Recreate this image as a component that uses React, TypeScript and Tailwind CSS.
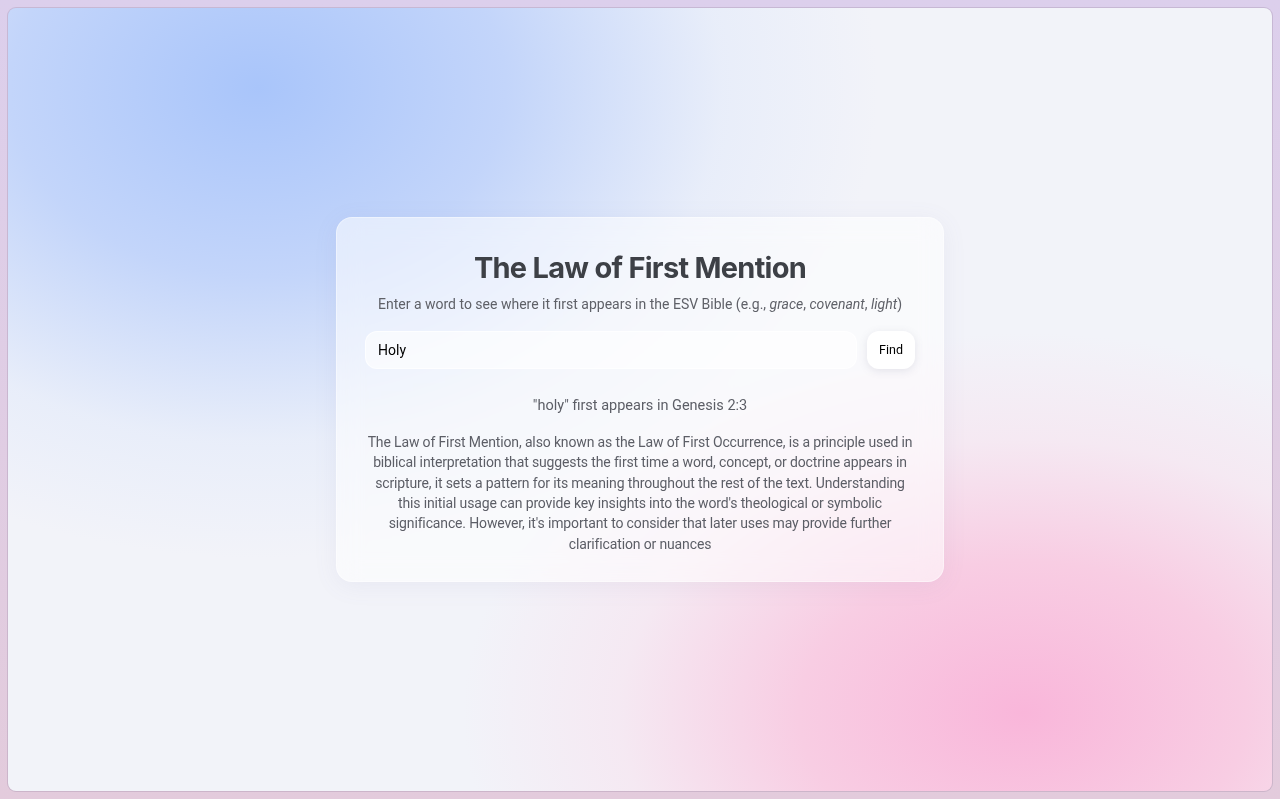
import { useState } from "react";

export default function App() {
  const [word, setWord] = useState("Holy");

  return (
    <div className="h-screen w-full bg-gradient-to-b from-[#dccfec] to-[#e3cbdc] p-2 font-['Roboto',sans-serif]">
      <div className="flex h-full w-full items-center justify-center overflow-hidden rounded-lg bg-[#f2f3f9] bg-[radial-gradient(ellipse_620px_470px_at_250px_80px,#a9c5fa_0%,#c3d5fa_40%,rgba(226,234,250,0.6)_75%,rgba(242,243,249,0)_100%),radial-gradient(ellipse_560px_380px_at_1015px_705px,#f9b6da_0%,#f8cde3_40%,rgba(247,226,238,0.6)_72%,rgba(242,243,249,0)_100%)] shadow-[0_0_0_1px_rgba(160,140,170,0.35)]">
        <div className="w-[608px] rounded-2xl border border-white/40 bg-white/55 px-[27px] pb-[27px] pt-8 shadow-[0_4px_24px_rgba(120,120,160,0.08)] backdrop-blur-md">
          <h1 className="text-center font-['Inter',sans-serif] text-[29px] font-bold leading-9 tracking-tight text-[#3d4046]">
            The Law of First Mention
          </h1>
          <p className="mt-2 text-center text-[14px] leading-5 text-[#5f6168]">
            Enter a word to see where it first appears in the ESV Bible (e.g., <em>grace</em>,{" "}
            <em>covenant</em>, <em>light</em>)
          </p>
          <form
            className="mt-[17px] flex gap-[10px] px-px"
            onSubmit={(e) => e.preventDefault()}
          >
            <input
              value={word}
              onChange={(e) => setWord(e.target.value)}
              className="h-[38px] flex-1 rounded-xl border border-white/70 bg-white/60 px-3 text-[14px] text-black outline-none"
            />
            <button
              type="submit"
              className="h-[38px] w-[48px] rounded-xl bg-white pt-0.5 text-[12.5px] text-black shadow-[0_2px_8px_rgba(100,100,130,0.15)]"
            >
              Find
            </button>
          </form>
          <p className="mt-[27px] text-center text-[14.5px] leading-5 text-[#5c5e66]">
            "holy" first appears in Genesis 2:3
          </p>
          <p className="mt-4 text-center text-[14px] leading-[20.4px] tracking-[-0.01em] text-[#5c5e66]">
            The Law of First Mention, also known as the Law of First Occurrence, is a principle used in
            biblical interpretation that suggests the first time a word, concept, or doctrine appears in
            scripture, it sets a pattern for its meaning throughout the rest of the text. Understanding
            this initial usage can provide key insights into the word's theological or symbolic
            significance. However, it's important to consider that later uses may provide further
            clarification or nuances
          </p>
        </div>
      </div>
    </div>
  );
}
